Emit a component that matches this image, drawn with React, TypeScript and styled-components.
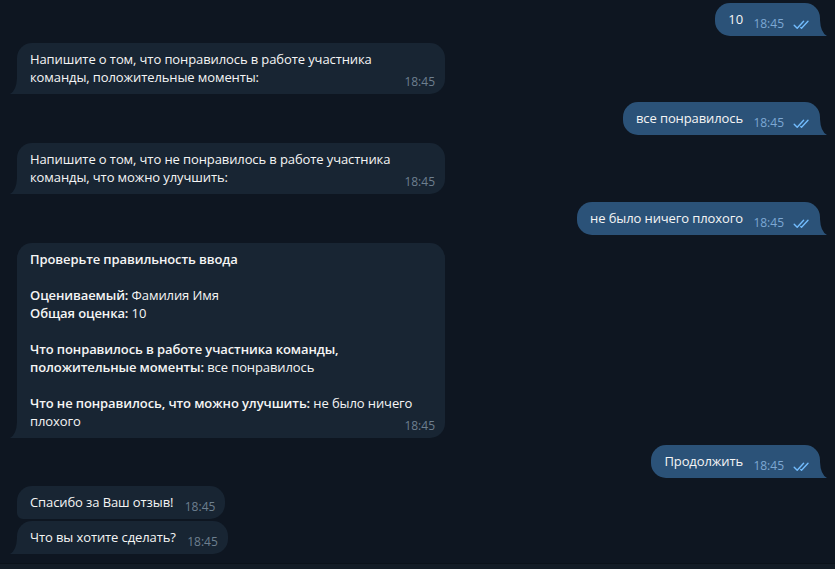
import React from "react";
import styled, { createGlobalStyle } from "styled-components";

const GlobalStyle = createGlobalStyle`
  html, body { margin: 0; padding: 0; height: 100%; }
  body {
    background: #0e1621;
    font-family: "Open Sans", "Noto Sans", sans-serif;
    -webkit-font-smoothing: antialiased;
  }
  #root { height: 100%; }
`;

const Page = styled.div`
  height: 100vh;
  display: flex;
  flex-direction: column;
  background: #0e1621;
  overflow: hidden;
`;

const History = styled.div`
  flex: 1;
  display: flex;
  flex-direction: column;
  padding: 3px 15px 0 17px;
`;

const Footer = styled.div`
  height: 5px;
  background: #131c26;
  border-top: 1px solid #0b121a;
`;

const Row = styled.div<{ $out?: boolean; $gap: number }>`
  display: flex;
  justify-content: ${(p) => (p.$out ? "flex-end" : "flex-start")};
  margin-top: ${(p) => p.$gap}px;
`;

const Bubble = styled.div<{ $out?: boolean; $tail?: boolean }>`
  position: relative;
  max-width: 428px;
  box-sizing: border-box;
  padding: 7px 13px 8px 13px;
  background: ${(p) => (p.$out ? "#2b5278" : "#182533")};
  color: #f5f5f5;
  font-size: 13px;
  line-height: 18px;
  letter-spacing: -0.1px;
  border-radius: 15px;
  ${(p) =>
    p.$tail
      ? p.$out
        ? "border-bottom-right-radius: 0;"
        : "border-bottom-left-radius: 0;"
      : p.$out
      ? ""
      : "border-bottom-left-radius: 6px;"}
`;

const TailSvg = styled.svg<{ $out?: boolean }>`
  position: absolute;
  bottom: 0;
  width: 7px;
  height: 16px;
  ${(p) => (p.$out ? "right: -7px;" : "left: -7px; transform: scaleX(-1);")}
`;

const Spacer = styled.span<{ $out?: boolean }>`
  display: inline-block;
  width: ${(p) => (p.$out ? 64 : 39)}px;
  height: 1px;
`;

const Meta = styled.div`
  position: absolute;
  right: 10px;
  bottom: 5px;
  display: flex;
  align-items: center;
  gap: 9px;
`;

const Time = styled.span<{ $out?: boolean }>`
  font-size: 12px;
  line-height: 14px;
  letter-spacing: 0;
  color: ${(p) => (p.$out ? "#7da8d3" : "#6d7f8f")};
`;

const Checks = styled.svg`
  width: 17px;
  height: 10px;
  margin-top: 2px;
`;

const B = styled.span`
  font-weight: 600;
`;

function Tail({ out, color }: { out?: boolean; color: string }) {
  return (
    <TailSvg $out={out} viewBox="0 0 7 16">
      <path d="M0 0 Q0.5 12.5 7 16 H0 Z" fill={color} />
    </TailSvg>
  );
}

function Message({
  out,
  tail = true,
  gap,
  children,
}: {
  out?: boolean;
  tail?: boolean;
  gap: number;
  children: React.ReactNode;
}) {
  return (
    <Row $out={out} $gap={gap}>
      <Bubble $out={out} $tail={tail}>
        {children}
        <Spacer $out={out} />
        <Meta>
          <Time $out={out}>18:45</Time>
          {out && (
            <Checks viewBox="0 0 17 10">
              <path
                d="M1.2 5.2 L4.2 8.3 L10.6 1.3"
                fill="none"
                stroke="#72bcfd"
                strokeWidth="1.4"
                strokeLinecap="round"
                strokeLinejoin="round"
              />
              <path
                d="M7.8 7.6 L8.5 8.3 L15 1.3"
                fill="none"
                stroke="#72bcfd"
                strokeWidth="1.4"
                strokeLinecap="round"
                strokeLinejoin="round"
              />
            </Checks>
          )}
        </Meta>
        {tail && <Tail out={out} color={out ? "#2b5278" : "#182533"} />}
      </Bubble>
    </Row>
  );
}

export default function App() {
  return (
    <>
      <GlobalStyle />
      <Page>
        <History>
          <Message out gap={0}>10</Message>
          <Message gap={7}>
            Напишите о том, что понравилось в работе участника команды,
            положительные моменты:
          </Message>
          <Message out gap={8}>все понравилось</Message>
          <Message gap={8}>
            Напишите о том, что не понравилось в работе участника команды, что
            можно улучшить:
          </Message>
          <Message out gap={8}>не было ничего плохого</Message>
          <Message gap={8}>
            <B>Проверьте правильность ввода</B>
            <br />
            <br />
            <B>Оцениваемый:</B> Фамилия Имя
            <br />
            <B>Общая оценка:</B> 10
            <br />
            <br />
            <B>Что понравилось в работе участника команды, положительные моменты:</B>{" "}
            все понравилось
            <br />
            <br />
            <B>Что не понравилось, что можно улучшить:</B> не было ничего плохого
          </Message>
          <Message out gap={7}>Продолжить</Message>
          <Message gap={8} tail={false}>
            Спасибо за Ваш отзыв!
          </Message>
          <Message gap={2}>Что вы хотите сделать?</Message>
        </History>
        <Footer />
      </Page>
    </>
  );
}
